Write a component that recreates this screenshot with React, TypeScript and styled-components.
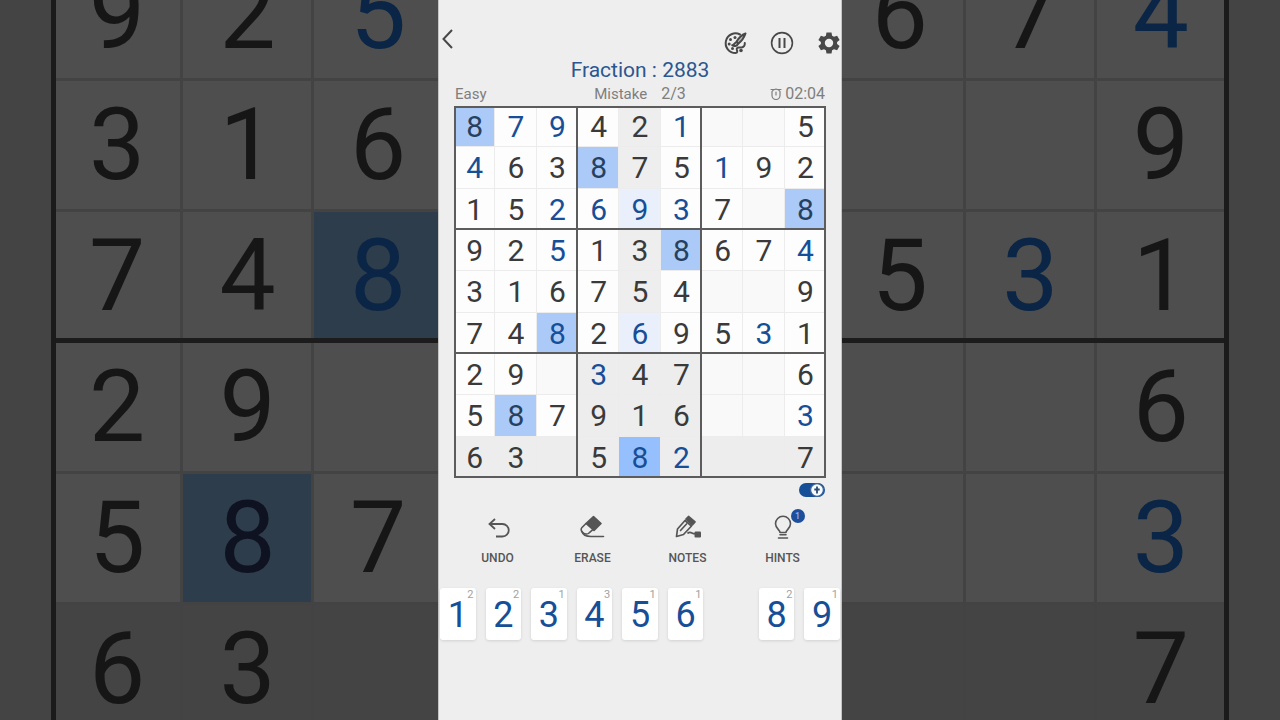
import React, { useState } from 'react';
import styled, { createGlobalStyle } from 'styled-components';

const GlobalStyle = createGlobalStyle`
  *, *::before, *::after { box-sizing: border-box; }
  body {
    margin: 0;
    background: #444444;
    font-family: Roboto, "Liberation Sans", sans-serif;
  }
  button {
    margin: 0;
    padding: 0;
    border: 0;
    background: none;
    color: inherit;
    font-family: inherit;
    cursor: pointer;
  }
`;

const colors = {
  ink: '#3a3a3a',
  matchInk: '#26415f',
  blue: '#164f98',
  match: '#abcaf8',
  selected: '#96c0fd',
  screen: '#eeeeee',
};

/* A "b" after a digit means the player filled it in. */
const board: string[][] = [
  ['8', '7b', '9b', '4', '2', '1b', '', '', '5'],
  ['4b', '6', '3', '8', '7', '5', '1b', '9', '2'],
  ['1', '5', '2b', '6b', '9b', '3b', '7', '', '8'],
  ['9', '2', '5b', '1', '3', '8', '6', '7', '4b'],
  ['3', '1', '6', '7', '5', '4', '', '', '9'],
  ['7', '4', '8b', '2', '6b', '9', '5', '3b', '1'],
  ['2', '9', '', '3b', '4', '7', '', '', '6'],
  ['5', '8', '7', '9', '1', '6', '', '', '3b'],
  ['6', '3', '', '5', '8b', '2b', '', '', '7'],
];

const keys = [
  { digit: 1, left: 2 },
  { digit: 2, left: 2 },
  { digit: 3, left: 1 },
  { digit: 4, left: 3 },
  { digit: 5, left: 1 },
  { digit: 6, left: 1 },
  { digit: 7, left: 0 },
  { digit: 8, left: 2 },
  { digit: 9, left: 1 },
];

const Stage = styled.div`
  display: grid;
  grid-template: minmax(0, 1fr) / minmax(0, 1fr);
  height: 100vh;
  min-height: 660px;
  overflow: hidden;
`;

const Backdrop = styled.div`
  grid-area: 1 / 1;
  align-self: end;
  display: grid;
  grid-template-columns: repeat(9, minmax(0, 1fr));
  margin: 0 53px -16px;
  outline: 5px solid #1b1b1b;
  outline-offset: -3px;
`;

const BackdropCell = styled.div<{ $blue: boolean; $hit: boolean; $dim: boolean; $thick: boolean }>`
  display: flex;
  align-items: center;
  justify-content: center;
  height: 131px;
  padding: 0 2px 4px 0;
  box-shadow:
    inset 0 ${p => (p.$thick ? '-5px #1c1c1c' : '-3px #434343')},
    inset -3px 0 #434343;
  background: ${p => (p.$hit ? '#2d3d4b' : p.$dim ? '#444444' : '#4e4e4e')};
  color: ${p => (p.$blue ? '#0a2545' : p.$hit ? '#0f1220' : '#161616')};
  font-size: 100px;
  line-height: 120px;
`;

const Phone = styled.main`
  grid-area: 1 / 1;
  justify-self: center;
  display: flex;
  flex-direction: column;
  width: 404px;
  max-width: 100%;
  padding-top: 28px;
  border: solid #c4c4c4;
  border-width: 0 1px;
  background: ${colors.screen};
  z-index: 1;
`;

const TopBar = styled.header`
  display: flex;
  align-items: flex-start;
  justify-content: space-between;
  height: 28px;
`;

const IconGroup = styled.div`
  display: flex;
  gap: 23px;
  padding-top: 3px;
`;

const IconButton = styled.button`
  display: flex;
  color: #484848;
`;

const Score = styled.h1`
  margin: 0;
  color: #2b5690;
  font-size: 21px;
  font-weight: 400;
  line-height: 28px;
  text-align: center;
`;

const Status = styled.div`
  display: grid;
  grid-template-columns: 1fr auto 1fr;
  align-items: start;
  padding: 0 16px;
  height: 22px;
  color: #7e7e7e;
  font-size: 15px;
  line-height: 20px;
`;

const Mistakes = styled.span`
  display: flex;
  gap: 14px;
`;

const Timer = styled.span`
  display: flex;
  align-items: center;
  justify-content: flex-end;
  gap: 3px;
`;

const Count = styled.span`
  font-size: 16px;
`;

const Board = styled.div`
  display: grid;
  grid-template-columns: repeat(9, minmax(0, 1fr));
  grid-template-rows: repeat(9, minmax(0, 1fr));
  aspect-ratio: 1;
  margin: 0 15px;
  outline: 2px solid #5c5c5c;
  outline-offset: -2px;
`;

const Cell = styled.button<{ $ink: string; $fill: string; $edgeRight: boolean; $edgeBottom: boolean }>`
  display: flex;
  align-items: center;
  justify-content: center;
  padding-top: 1px;
  box-shadow:
    ${p => (p.$edgeRight ? 'inset -2px 0 #5c5c5c,' : '')}
    inset 0 ${p => (p.$edgeBottom ? '-2px #5c5c5c' : '-1px #ececec')},
    inset -1px 0 #ececec;
  background: ${p => p.$fill};
  color: ${p => p.$ink};
  font-size: 30px;
  line-height: 36px;
`;

const SwitchRow = styled.div`
  display: flex;
  justify-content: flex-end;
  padding: 4px 16px 0;
`;

const Switch = styled.button`
  display: flex;
`;

const Tools = styled.div`
  display: grid;
  grid-template-columns: repeat(4, minmax(0, 1fr));
  margin-top: 16px;
  padding: 0 11px;
`;

const Tool = styled.button`
  display: flex;
  flex-direction: column;
  align-items: center;
  gap: 8px;
  color: #555555;
  font-size: 12px;
  font-weight: 500;
  line-height: 16px;
`;

const ToolIcon = styled.span`
  position: relative;
  display: flex;
`;

const Badge = styled.span`
  position: absolute;
  top: -5px;
  right: -8px;
  width: 14px;
  height: 14px;
  border-radius: 50%;
  background: #1d4f9c;
  color: #8fb4e6;
  font-size: 9px;
  line-height: 14px;
  text-align: center;
`;

const Keypad = styled.div`
  display: grid;
  grid-template-columns: repeat(9, minmax(0, 1fr));
  gap: 10px;
  margin-top: 22px;
  padding: 0 1px;
`;

const Key = styled.button`
  position: relative;
  height: 52px;
  border-radius: 3px;
  background: #ffffff;
  box-shadow: 0 1px 3px rgba(0, 0, 0, 0.12);
  color: ${colors.blue};
  font-size: 36px;
  line-height: 54px;
  text-align: center;
`;

const Remaining = styled.span`
  position: absolute;
  top: 1px;
  right: 2px;
  color: #a2a2a2;
  font-size: 11px;
  line-height: 12px;
`;

const stroke = { fill: 'none', stroke: 'currentColor', strokeLinecap: 'round', strokeLinejoin: 'round' } as const;

const BackIcon = () => (
  <svg width="18" height="24" viewBox="0 0 18 24" {...stroke} strokeWidth="2" strokeLinecap="butt" strokeLinejoin="miter">
    <path d="M13 2 L4.500 11 L13 20" />
  </svg>
);

const PaletteIcon = () => (
  <svg width="24" height="24" viewBox="0 0 24 24" {...stroke} strokeWidth="2">
    <path d="M17 3.500A9.800 9.800 0 1 0 12.500 22c2 0 2-1.800 1.400-3-.6-1.400.4-2.600 2-2.600h2.600c2.200 0 3.500-1.800 3.300-4.400" />
    <path d="M22.500 2.500c-3.500 1.200-7 4.700-9 8.200l2 1.900c3-2.500 5.600-6 7-10.100z" fill="currentColor" fillOpacity=".35" />
    <path d="M13.200 11.500c-1.800.2-2 2.500-4 2.800 1.800 1.400 4.800.9 5.600-1.200" />
    <g fill="currentColor" stroke="none">
      <circle cx="12" cy="6.500" r="1.500" />
      <circle cx="7.500" cy="8.500" r="1.500" />
      <circle cx="6.200" cy="13" r="1.500" />
      <circle cx="9.500" cy="17.600" r="1.500" />
      <circle cx="18" cy="19.500" r="1.800" />
    </g>
  </svg>
);

const PauseIcon = () => (
  <svg width="24" height="24" viewBox="0 0 24 24" {...stroke} strokeWidth="1.600" strokeLinecap="butt">
    <circle cx="12" cy="12" r="10.400" />
    <path d="M9.500 7v10M14.500 7v10" strokeWidth="2" />
  </svg>
);

const GearIcon = () => (
  <svg width="24" height="24" viewBox="0 0 24 24" fill="currentColor">
    <path
      fillRule="evenodd"
      d="M9.500 1.500h5l.6 3.200 1.900 1.100 3.100-1.100 2.500 4.300-2.500 2.100v1.800l2.500 2.100-2.500 4.300-3.100-1.100-1.900 1.100-.6 3.200h-5l-.6-3.200L7 18.200l-3.100 1.100L1.400 15l2.500-2.100v-1.800L1.400 9l2.500-4.300L7 5.800l1.900-1.100zM12 7.800a4.200 4.200 0 1 0 0 8.400 4.200 4.200 0 0 0 0-8.400z"
    />
  </svg>
);

const ClockIcon = () => (
  <svg width="12" height="12" viewBox="0 0 12 12" {...stroke} strokeWidth="1.200">
    <path d="M2 3.500v4A4 4 0 0 0 10 7.500v-4A4.500 4.500 0 0 0 2 3.500zM1 1.500h2.500M8.500 1.500H11M6 4v3" />
  </svg>
);

const SwitchIcon = () => (
  <svg width="26" height="16" viewBox="0 0 26 16">
    <rect x="0" y="1" width="26" height="14" rx="7" fill="#164f98" />
    <circle cx="18" cy="8" r="6.400" fill="#f6fbff" stroke="#3a6294" strokeWidth="1.200" />
    <path d="M18 4.500v7M15.300 7.500h5.400" stroke="#2b4a70" strokeWidth="1.800" />
  </svg>
);

const UndoIcon = () => (
  <svg width="28" height="28" viewBox="0 0 28 28" {...stroke} strokeWidth="1.800" strokeLinecap="butt" strokeLinejoin="miter">
    <path d="M6 10h12.500a6 6 0 0 1 0 12.500H12" />
    <path d="M11 5L5.500 10l5.500 5" />
  </svg>
);

const EraseIcon = () => (
  <svg width="28" height="28" viewBox="0 0 28 28" {...stroke} strokeWidth="1.600">
    <path d="M14.500 2.500l7.500 7-7 7-8-7z" fill="currentColor" />
    <path d="M7 9.500L3 13.500c-1.400 1.400-1 3.400.5 4.800 1.900 1.800 5 2.300 6.900.4l4.600-4" />
    <path d="M3 17.500c1 4 4.500 5 9 5h12.500" />
  </svg>
);

const NotesIcon = () => (
  <svg width="28" height="28" viewBox="0 0 28 28" {...stroke} strokeWidth="1.700">
    <path d="M11 6.500l6.500 5.500-8 8.500-7 2 1-7.500z" />
    <path d="M12 5l2.500-2.500 6.500 5.500-2.500 2.800z" fill="currentColor" />
    <path d="M6.500 16.500l6-6.500" />
    <path d="M14 19c3-2.500 4.500 2 8 .5" />
    <rect x="20.500" y="17.500" width="6.500" height="6" rx="1" fill="currentColor" stroke="none" />
  </svg>
);

const HintIcon = () => (
  <svg width="28" height="28" viewBox="0 0 28 28" {...stroke} strokeWidth="1.600">
    <path d="M11 18.500c0-2.600-4.500-4.200-4.500-8.700a7.500 7.500 0 0 1 15 0c0 4.500-4.500 6.100-4.500 8.700z" />
    <path d="M11 20.800h6M9.500 24h9" />
  </svg>
);

const tools = [
  { label: 'UNDO', icon: <UndoIcon /> },
  { label: 'ERASE', icon: <EraseIcon /> },
  { label: 'NOTES', icon: <NotesIcon /> },
  { label: 'HINTS', icon: <HintIcon />, badge: '1' },
];

const boxOf = (r: number, c: number) => Math.floor(r / 3) * 3 + Math.floor(c / 3);

export default function App() {
  const [selected, setSelected] = useState({ row: 8, col: 4 });
  const [autoMode, setAutoMode] = useState(true);
  const current = board[selected.row][selected.col][0];

  const fillFor = (r: number, c: number) => {
    if (r === selected.row && c === selected.col) return colors.selected;
    if (current && board[r][c][0] === current) return colors.match;
    if (r === selected.row || boxOf(r, c) === boxOf(selected.row, selected.col)) return '#ededed';
    if (c === selected.col) return board[r][c].endsWith('b') ? '#eaf0fb' : '#eeeeee';
    return board[r][c] ? '#fdfdfd' : '#f9f9f9';
  };

  const inkFor = (value: string) => {
    if (value.endsWith('b')) return colors.blue;
    return current && value === current ? colors.matchInk : colors.ink;
  };

  return (
    <>
      <GlobalStyle />
      <Stage>
        <Backdrop aria-hidden="true">
          {board.slice(3).map((row, r) =>
            row.map((value, c) => {
              const covered = c > 2 && c < 6;
              return (
                <BackdropCell
                  key={`${r}-${c}`}
                  $blue={value.endsWith('b')}
                  $hit={!covered && value[0] === '8'}
                  $dim={r === 5}
                  $thick={r === 2}
                >
                  {covered ? '' : value[0]}
                </BackdropCell>
              );
            }),
          )}
        </Backdrop>

        <Phone>
          <TopBar>
            <IconButton aria-label="Back"><BackIcon /></IconButton>
            <IconGroup>
              <IconButton aria-label="Theme"><PaletteIcon /></IconButton>
              <IconButton aria-label="Pause"><PauseIcon /></IconButton>
              <IconButton aria-label="Settings"><GearIcon /></IconButton>
            </IconGroup>
          </TopBar>
          <Score>Fraction : 2883</Score>
          <Status>
            <span>Easy</span>
            <Mistakes><span>Mistake</span><Count>2/3</Count></Mistakes>
            <Timer><ClockIcon /><Count>02:04</Count></Timer>
          </Status>

          <Board>
            {board.map((row, r) =>
              row.map((value, c) => (
                <Cell
                  key={`${r}-${c}`}
                  aria-label={`Row ${r + 1}, column ${c + 1}`}
                  onClick={() => setSelected({ row: r, col: c })}
                  $ink={inkFor(value)}
                  $fill={fillFor(r, c)}
                  $edgeRight={c === 2 || c === 5}
                  $edgeBottom={r === 2 || r === 5}
                >
                  {value[0]}
                </Cell>
              )),
            )}
          </Board>

          <SwitchRow>
            <Switch role="switch" aria-checked={autoMode} aria-label="Quick fill" onClick={() => setAutoMode(!autoMode)}>
              <SwitchIcon />
            </Switch>
          </SwitchRow>

          <Tools>
            {tools.map(tool => (
              <Tool key={tool.label}>
                <ToolIcon>
                  {tool.icon}
                  {tool.badge && <Badge>{tool.badge}</Badge>}
                </ToolIcon>
                {tool.label}
              </Tool>
            ))}
          </Tools>

          <Keypad>
            {keys.map(({ digit, left }) =>
              left > 0 ? (
                <Key key={digit}>
                  {digit}
                  <Remaining>{left}</Remaining>
                </Key>
              ) : (
                <span key={digit} />
              ),
            )}
          </Keypad>
        </Phone>
      </Stage>
    </>
  );
}
